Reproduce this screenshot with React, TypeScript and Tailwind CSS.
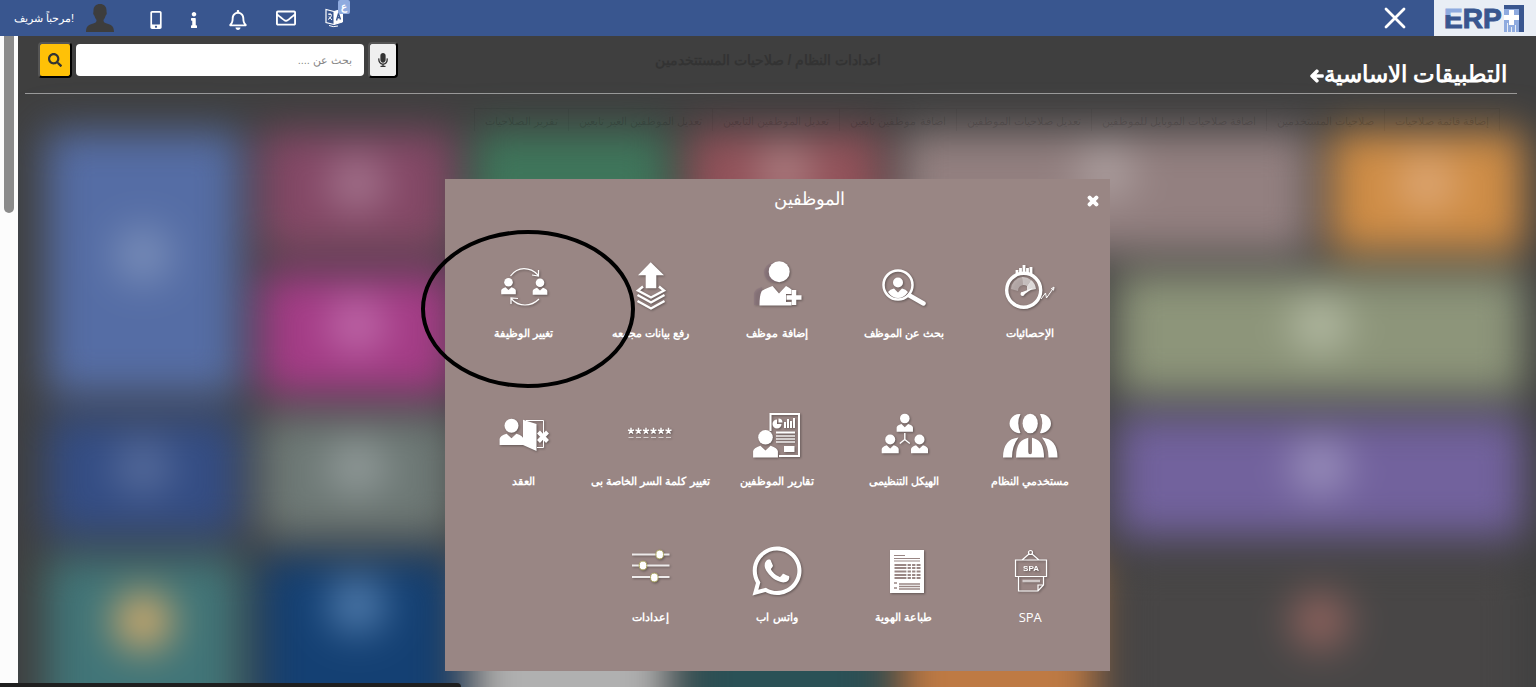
import React, { useState } from "react";
import {
  FaArrowLeft,
  FaInfo,
  FaMicrophone,
  FaMobileAlt,
  FaRegBell,
  FaRegEnvelope,
  FaSearch,
  FaTimes,
  FaWhatsapp,
} from "react-icons/fa";

interface Tile {
  className: string;
  glow?: string;
}

interface AppLink {
  label: string;
  icon: React.ReactNode;
}

interface PersonProps {
  x: number;
  y: number;
  r: number;
}

const tiles: Tile[] = [
  { className: "bg-[#cf8d46]", glow: "mt-6 bg-[#dda878]" },
  { className: "bg-[#938080] col-span-2", glow: "mt-3 bg-[#aea1a1]" },
  { className: "bg-[#92525a]", glow: "mt-3 bg-[#ad8083]" },
  { className: "bg-[#3f765b]" },
  { className: "bg-[#844866]", glow: "mt-6 bg-[#a5768f]" },
  { className: "bg-[#556da5] row-span-2", glow: "mt-24 bg-[#7c90ba]" },
  { className: "bg-[#8d957a] col-span-2", glow: "mt-6 bg-[#b4bba4]" },
  { className: "bg-[#484646]" },
  { className: "bg-[#484646]" },
  { className: "bg-[#484646]" },
  { className: "bg-[#a43c86]", glow: "mt-6 bg-[#c06cab]" },
  { className: "bg-[#72629d] col-span-2", glow: "mt-6 bg-[#9c92bd]" },
  { className: "bg-[#484646]" },
  { className: "bg-[#484646]" },
  { className: "bg-[#484646]" },
  { className: "bg-[#6e7976]", glow: "mt-6 bg-[#949d9c]" },
  { className: "bg-[#344d84]", glow: "mt-6 bg-[#586d9c]" },
  { className: "bg-[#484646] col-span-2 row-span-2", glow: "mt-9 bg-[#96655f]" },
  { className: "bg-[#be7a44] row-span-2" },
  { className: "bg-[#2b5156] row-span-2" },
  { className: "bg-[#b0b0b0] row-span-2" },
  { className: "bg-[#144073] row-span-2", glow: "mt-5 bg-[#5681b1]" },
  { className: "bg-[#417578] row-span-2", glow: "mt-9 bg-[#e0b06a]" },
];

const pageTabs = [
  "إضافة قائمة صلاحيات",
  "صلاحيات المستخدمين",
  "اضافة صلاحيات الموبايل للموظفين",
  "تعديل صلاحيات الموظفين",
  "اضافة موظفين تابعين",
  "تعديل الموظفين التابعين",
  "تعديل الموظفين الغير تابعين",
  "تقرير الصلاحيات",
];

// head centred on x/y, shoulders are drawn relative to the head radius
const Person = ({ x, y, r }: PersonProps) => (
  <g transform={`translate(${x} ${y}) scale(${r})`} fill="#fff">
    <circle r="1" />
    <path d="M-1.7 2.75V1.9Q-1.65 1.45-.7 1.15L0 1.8.7 1.15Q1.65 1.45 1.7 1.9V2.75Z" />
  </g>
);

const Icon = ({ children }: { children: React.ReactNode }) => (
  <svg
    viewBox="0 0 56 56"
    className="size-14 overflow-visible drop-shadow-[1px_1px_1px_rgba(0,0,0,0.35)]"
    fill="none"
    stroke="none"
    aria-hidden="true"
  >
    {children}
  </svg>
);

const rows: AppLink[][] = [
  [
    {
      label: "الإحصائيات",
      icon: (
        <Icon>
          <path d="M15 15v-4M18.500 14V9M22 14V6M25.500 14V9M29 15V8" stroke="#fff" strokeWidth="2.800" />
          <circle cx="21.700" cy="31.300" r="17" stroke="#fff" strokeWidth="3.400" />
          <path d="M9 30A13 13 0 0 1 20 18l1 8a6 6 0 0 0-5 6Z" fill="#fff" opacity=".35" />
          <path d="M20 18a13 13 0 0 1 9 3l-4 6a6 6 0 0 0-4-1Z" fill="#fff" opacity=".55" />
          <path d="M29 21a13 13 0 0 1 5 9l-9 2v-5Z" fill="#fff" opacity=".75" />
          <path d="M19 33.500 31 29l-9.500 7Z" fill="#fff" />
          <circle cx="20.500" cy="35" r="2" fill="#fff" />
          <path d="M39 40l4.500-6 1 5 7-10M49 30l3-2-.5 3.500" stroke="#fff" />
        </Icon>
      ),
    },
    {
      label: "بحث عن الموظف",
      icon: (
        <Icon>
          <circle cx="22" cy="26" r="14.500" stroke="#fff" strokeWidth="2.500" />
          <circle cx="22" cy="23.500" r="5" fill="#fff" />
          <path d="M12 33q2-3 6-3.500l4 4 4-4q4 .5 6 3.500-4 6-10 6t-10-6Z" fill="#fff" />
          <path d="m33.500 36.500 14 8" stroke="#fff" strokeWidth="4.500" strokeLinecap="round" />
        </Icon>
      ),
    },
    {
      label: "إضافة موظف",
      icon: (
        <Icon>
          <g fill="#86707c" opacity=".5">
            <circle cx="25" cy="13.500" r="10" />
            <path d="M5 46V34q1-4 8-6v18Z" />
          </g>
          <circle cx="30.200" cy="12.700" r="10.500" fill="#fff" />
          <path
            d="M10.500 46.500q0-10 2-14 1-2 11-5.500l6.500 7.500 7-7.500q3.500 1.500 5.500 3.500v4.500H37v8h5.500v3.500Z"
            fill="#fff"
          />
          <path d="M45 31v15M37.500 38.500h15" stroke="#fff" strokeWidth="4.500" />
        </Icon>
      ),
    },
    {
      label: "رفع بيانات مجمعه",
      icon: (
        <Icon>
          <path d="m28.700 3.300 13.300 13h-7.700v13H23.700v-13H16Z" fill="#fff" />
          <path
            d="m21 27.500-5 4L29 38.500l13-7-5-4M15.500 36 29 43.500 42.500 36M15.500 42 29 49.500 42.500 42"
            stroke="#fff"
            strokeWidth="2.400"
          />
        </Icon>
      ),
    },
    {
      label: "تغيير الوظيفة",
      icon: (
        <Icon>
          <Person x={12.500} y={23.300} r={4.300} />
          <Person x={44} y={23.800} r={4.300} />
          <path
            d="M14.500 17Q20 9.700 28 9.700T42 16M36 16l6.500 1V11M43 40q-6 6-14 6T15.500 40M15 45v-6l7 .5"
            stroke="#fff"
            strokeWidth="1.200"
          />
        </Icon>
      ),
    },
  ],
  [
    {
      label: "مستخدمي النظام",
      icon: (
        <Icon>
          <g fill="#fff">
            <ellipse cx="28.200" cy="16.500" rx="7.600" ry="9.800" />
            <path d="M18.500 7q-4.500 9 0 19-3 .6-6-1.200-5-3.500-5-8.300t5-8.300Q15.500 6.500 18.500 7ZM38 7q4.500 9 0 19 3 .6 6-1.200 5-3.500 5-8.300t-5-8.300q-3-1.700-6-1.200Z" />
            <path d="M14 50.500q0-16 10-19l2.300-.8V45q0 2.300 1.900 2.300T30 45V30.700l2.500.8q9.500 3 9.500 19Z" />
            <path d="M1 50.500Q1 32 16.500 30.500 10 39 10 50.500ZM55.500 50.500Q55.500 32 40 30.500q6.500 8.500 6.500 20Z" />
          </g>
        </Icon>
      ),
    },
    {
      label: "الهيكل التنظيمى",
      icon: (
        <Icon>
          <Person x={28.800} y={11.500} r={4.800} />
          <Person x={14.200} y={32.500} r={5} />
          <Person x={43.500} y={32.500} r={5} />
          <path d="M28.800 26v6.500m0 0-5 4m5-4 5 4" stroke="#fff" strokeWidth="1.400" />
        </Icon>
      ),
    },
    {
      label: "تقارير الموظفين",
      icon: (
        <Icon>
          <path d="M21.500 24V7H50v42H30" stroke="#fff" strokeWidth="2" />
          <path d="M28 12.500a4.500 4.500 0 1 0 4.500 4.500H28Z" fill="#fff" />
          <path d="M29.500 11.500v4h4q0-3.800-4-4Z" fill="#fff" />
          <path d="M36 21v-6M39 21v-9M42 21v-7M45 21V11" stroke="#fff" strokeWidth="2" />
          <path d="M27 25.500h19" stroke="#fff" strokeWidth="2" />
          <path d="M27 29h19M27 32h19M27 35h19" stroke="#fff" strokeWidth="2" opacity=".65" />
          <path d="M35 39h10.500v6H35Z" fill="#fff" />
          <Person x={16.500} y={30.300} r={7.300} />
        </Icon>
      ),
    },
    {
      label: "تغيير كلمة السر الخاصة بى",
      icon: (
        <Icon>
          {[9, 16.500, 24, 31.500, 39, 46.500].map((x) => (
            <g key={x} transform={`translate(${x} 24)`} stroke="#fff">
              <path d="M0-3.200V0L3-1M0 0l2 2.600M0 0l-2 2.600M0 0l-3-1" strokeWidth="1.400" />
              <path d="M-2.500 6.500h5" opacity=".6" />
            </g>
          ))}
        </Icon>
      ),
    },
    {
      label: "العقد",
      icon: (
        <Icon>
          <Person x={15.500} y={18.700} r={7} />
          <path d="M30 13.500h17.500v27H41" stroke="#fff" />
          <path d="M27 12.700 40.500 17v27L27 38Z" fill="#fff" />
          <path d="m42.500 25 9 9.500M51.500 25l-9 9.500" stroke="#fff" strokeWidth="4" />
        </Icon>
      ),
    },
  ],
  [
    {
      label: "SPA",
      icon: (
        <Icon>
          <g stroke="#fff" strokeWidth="1.200">
            <circle cx="28.500" cy="9.500" r="2" />
            <path d="m27 11-7 6M30 11l7 6M13.500 17h31v16.500h-31ZM16.500 33.500V48H36l5.500-6v-8.500M36 48v-6h5.500" />
          </g>
          <path d="M20.500 38H38" stroke="#fff" strokeWidth="2.500" opacity=".6" />
          <text
            x="29"
            y="28"
            textAnchor="middle"
            fill="#fff"
            className="font-['Liberation_Sans',sans-serif] text-[8px] font-bold"
          >
            SPA
          </text>
        </Icon>
      ),
    },
    {
      label: "طباعة الهوية",
      icon: (
        <Icon>
          <path d="M14 7h34v43H14Z" fill="#fff" />
          <g stroke="#998684">
            <path d="M18 12.500h11M18 15.500h26M18 18h26" />
            <path d="M18.500 22h26M18.500 25h26M18.500 28.500h26M18.500 32h26M18.500 35h26" strokeWidth="2" />
            <path d="M23 41h21M23 43.500h21M23 46h21M18 40h3M18 45h3" strokeWidth="1.500" />
          </g>
          <path d="M31 20v17M35.500 20v17M40 20v17" stroke="#fff" strokeWidth="1.200" />
        </Icon>
      ),
    },
    {
      label: "واتس اب",
      icon: <FaWhatsapp className="size-14 drop-shadow-[1px_1px_1px_rgba(0,0,0,0.35)]" />,
    },
    {
      label: "إعدادات",
      icon: (
        <Icon>
          <path d="M10 11.500h37.500M10 22.500h37.500M10 34h37.500" stroke="#fff" strokeWidth="1.800" opacity=".85" />
          <g fill="#fff" stroke="#a9a45c">
            <ellipse cx="37.700" cy="11.500" rx="3.800" ry="4.400" />
            <ellipse cx="21" cy="22.500" rx="3.800" ry="4.400" />
            <ellipse cx="32.300" cy="34.500" rx="3.800" ry="4.400" />
          </g>
        </Icon>
      ),
    },
  ],
];

const Logo = () => (
  <a href="#" aria-label="ERP+" className="flex h-9 w-[102px] items-center justify-center bg-[#e9eef5]" dir="ltr">
    <svg viewBox="0 0 84 36" className="h-9 w-[84px] overflow-visible" aria-hidden="true">
      <defs>
        <linearGradient id="logo-e" x1="0" y1="0" x2="0" y2="1">
          <stop offset=".4" stopColor="#8fabdf" />
          <stop offset=".4" stopColor="#39568f" />
        </linearGradient>
      </defs>
      <text
        x="1"
        y="28"
        fill="#39568f"
        stroke="#39568f"
        className="font-['Liberation_Sans',sans-serif] text-[28px] font-bold"
        strokeWidth="1"
      >
        <tspan fill="url(#logo-e)" stroke="url(#logo-e)">
          E
        </tspan>
        RP
      </text>
      <path d="M61 8h15v24h-3v-7h-1v7h-3v-5h-1v5h-3v-9h-1v9h-3Z" fill="#8fabdf" />
      <path d="M61 5h20v27h-5V9H61Z" fill="#39568f" />
      <path d="M66 10h5v5h5v5h-5v5h-5v-5h-5v-5h5Z" fill="#fff" />
    </svg>
  </a>
);

const Translate = () => (
  <svg viewBox="0 0 18 20" className="h-5 w-[18px]" fill="none" stroke="#fff" aria-hidden="true">
    <path d="M9 3.500 17.500 1v13L9 16.500Z" fill="#fff" />
    <path d="M9 3.500 1 1.500v13l8 2" strokeWidth="1.200" />
    <path d="m11.500 12.500 2-7 2 6M12 10l3-.7" stroke="#39568f" strokeWidth="1.400" />
    <path d="m3 6 4 1M5 5v1.500M6.500 7.500Q6 10 3 11.500M4 8.500l3 3.500M4 17.500q4 2 9 .5" />
  </svg>
);

const Header = () => (
  <header className="relative z-10 flex h-9 shrink-0 items-center bg-[#39568f] text-white">
    <Logo />
    <button aria-label="إغلاق القائمة" className="mr-6 p-1">
      <svg viewBox="0 0 22 22" className="size-[22px]" stroke="#fff" strokeWidth="2.800" strokeLinecap="round" aria-hidden="true">
        <path d="m2 2 18 18M20 2 2 20" />
      </svg>
    </button>
    <nav className="mr-auto flex items-center">
      <button aria-label="اللغة" className="relative flex w-12 justify-center">
        <Translate />
        <span className="absolute -top-2 left-7 flex h-3.5 w-3 items-center justify-center rounded-xs bg-[#8fabdf] text-[10px] leading-none font-bold">
          ع
        </span>
      </button>
      <button aria-label="الرسائل" className="flex w-12 justify-center">
        <FaRegEnvelope className="size-5" />
      </button>
      <button aria-label="الإشعارات" className="mt-1 flex w-12 justify-center">
        <FaRegBell className="size-5" />
      </button>
      <button aria-label="معلومات" className="mt-1 flex w-10 justify-center">
        <FaInfo className="size-4" />
      </button>
      <button aria-label="الجوال" className="mt-1 flex w-9 justify-center">
        <FaMobileAlt className="size-[18px]" />
      </button>
    </nav>
    <a href="#" className="mr-6 ml-3.5 flex items-center gap-3">
      <svg viewBox="0 0 28 28" className="size-7" fill="#3d3d3d" aria-hidden="true">
        <path d="M14 0c4 0 6.500 2.500 6.500 6.500 0 2 .5 2.500.2 3.500-.2 1-1 1-1.200 2-.5 2-1.500 3-2 4 0 2 .5 2.500 2.500 3.300 4 1.500 8 1.700 8 8.700H0c0-7 4-7.200 8-8.700 2-.8 2.500-1.300 2.500-3.300-.5-1-1.500-2-2-4-.2-1-1-1-1.200-2-.3-1 .2-1.500.2-3.500C7.500 2.500 10 0 14 0Z" />
      </svg>
      <span className="text-[11px]">!مرحباً شريف</span>
    </a>
  </header>
);

const SearchBar = () => {
  const [query, setQuery] = useState("");

  return (
    <form className="flex items-center gap-1" onSubmit={(e) => e.preventDefault()}>
      <button
        type="button"
        aria-label="بحث صوتي"
        className="flex h-9 w-[30px] items-center justify-center rounded border-2 border-t-[#555] border-r-black border-b-black border-l-[#555] bg-[#efefef] text-[#333]"
      >
        <FaMicrophone className="size-3.5" />
      </button>
      <input
        type="text"
        aria-label="بحث"
        placeholder="بحث عن ...."
        value={query}
        onChange={(e) => setQuery(e.target.value)}
        className="h-8 w-72 rounded-sm bg-white px-3 text-[11px] text-black outline-none placeholder:text-[#888]"
      />
      <button
        type="submit"
        aria-label="بحث"
        className="flex h-9 w-[34px] items-center justify-center rounded border-2 border-t-[#555] border-r-black border-b-black border-l-[#555] bg-[#ffc107] text-[#333]"
      >
        <FaSearch className="size-3.5" />
      </button>
    </form>
  );
};

const TileGrid = () => (
  <div className="grid auto-rows-[122px] grid-cols-7 gap-5 pr-3 pl-7 blur-[20px]" aria-hidden="true">
    {tiles.map((tile, index) => (
      <div key={index} className={`flex justify-center ${tile.className}`}>
        {tile.glow && <span className={`size-14 rounded-full ${tile.glow}`} />}
      </div>
    ))}
  </div>
);

const EmployeesDialog = () => (
  <section
    role="dialog"
    aria-labelledby="dialog-title"
    className="relative w-[665px] bg-[#998684] px-4 pb-11 text-white"
  >
    <div className="flex h-10 items-center justify-center pl-16">
      <h2 id="dialog-title" className="text-lg font-medium">
        الموظفين
      </h2>
      <button aria-label="إغلاق" className="absolute right-2.5 mt-1">
        <FaTimes className="size-3.5 stroke-white stroke-[50]" />
      </button>
    </div>
    <div className="mt-10 flex flex-col">
      {rows.map((row, index) => (
        <ul key={index} className={`grid grid-cols-5 ${index === 0 ? "mb-16" : index === 1 ? "mb-13" : ""}`}>
          {row.map((app) => (
            <li key={app.label}>
              <a href="#" className="flex flex-col items-center gap-2">
                {app.icon}
                <span
                  className={`leading-5 whitespace-nowrap ${
                    app.label === "SPA" ? "font-['Open_Sans',sans-serif] text-[13px] font-medium" : "text-[11px] font-bold"
                  }`}
                >
                  {app.label}
                </span>
              </a>
            </li>
          ))}
        </ul>
      ))}
    </div>
    {/* highlight round the "change job" entry */}
    <svg
      viewBox="0 0 214 158"
      className="pointer-events-none absolute top-[51px] -left-6 h-[158px] w-[214px]"
      fill="none"
      aria-hidden="true"
    >
      <ellipse cx="107" cy="79" rx="105" ry="77" stroke="#000" strokeWidth="4" />
    </svg>
  </section>
);

const App = () => {
  return (
    <div
      dir="rtl"
      className="relative flex h-screen flex-col overflow-hidden bg-[#3f3f3f] font-['Liberation_Sans',sans-serif]"
    >
      <Header />
      <div className="flex min-h-0 flex-1">
        <main className="relative min-w-0 flex-1 overflow-hidden">
          <div className="mr-[19px] ml-[7px] flex h-[58px] items-start justify-between border-b border-[#9a9a9a] pt-1.5">
            <h1 className="mt-4 mr-2.5 flex items-center text-[23px] leading-8 font-bold text-white">
              التطبيقات الاساسية
              <FaArrowLeft className="mt-1 size-3.5 stroke-white stroke-[50]" />
            </h1>
            <div className="ml-[13px]">
              <SearchBar />
            </div>
          </div>
          <p className="pointer-events-none absolute inset-x-0 top-3 pr-[18px] text-center text-sm leading-6 font-bold text-[#333]">
            اعدادات النظام / صلاحيات المستتخدمين
          </p>
          <div className="relative z-[1] flex h-[37px] pt-3.5 pr-9 text-[11px] leading-4 text-black/15">
            {pageTabs.map((tab) => (
              <span key={tab} className="border-t border-r border-black/5 px-2.5 pt-1 whitespace-nowrap last:border-l">
                {tab}
              </span>
            ))}
          </div>
          <TileGrid />
        </main>
        <div className="w-[18px] shrink-0 bg-[#fcfcfc] pr-1">
          <div className="h-[177px] w-2.5 rounded-b-full bg-[#8b8b8b]" />
        </div>
      </div>
      <div className="pointer-events-none absolute inset-0 flex items-end justify-center pb-4 pl-[18px]">
        <div className="pointer-events-auto">
          <EmployeesDialog />
        </div>
      </div>
      <div className="absolute bottom-0 left-0 h-1 w-[461px] rounded-tr bg-[#1f1f1f]" />
    </div>
  );
};

export default App;
